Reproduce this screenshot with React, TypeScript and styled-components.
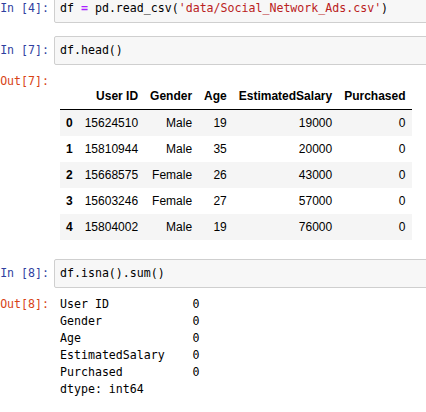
import React from 'react';
import styled, { createGlobalStyle } from 'styled-components';

const GlobalStyle = createGlobalStyle`
    html, body {
        margin: 0;
        padding: 0;
        background: #fff;
        overflow: hidden;
    }
`

type Row = [number, string, string, number, number, number]

const rows: Row[] = [
    [0, '15624510', 'Male', 19, 19000, 0],
    [1, '15810944', 'Male', 35, 20000, 0],
    [2, '15668575', 'Female', 26, 43000, 0],
    [3, '15603246', 'Female', 27, 57000, 0],
    [4, '15804002', 'Male', 19, 76000, 0],
]

const nulls = ['User ID', 'Gender', 'Age', 'EstimatedSalary', 'Purchased']

const pad = (s: string, n: number) => s + ' '.repeat(Math.max(1, n - s.length))

const App = () => {
    return <Notebook>
        <GlobalStyle />
        <Cell>
            <InputRow>
                <Prompt kind="in">In [4]:</Prompt>
                <InputBox>
                    df <Op>=</Op> pd.read_csv(<Str>'data/Social_Network_Ads.csv'</Str>)
                </InputBox>
            </InputRow>
        </Cell>
        <Cell>
            <InputRow>
                <Prompt kind="in">In [7]:</Prompt>
                <InputBox>df.head()</InputBox>
            </InputRow>
            <OutputRow $extra>
                <Prompt kind="out">Out[7]:</Prompt>
                <Frame>
                    <thead>
                        <tr>
                            <Th></Th>
                            <Th>User ID</Th>
                            <Th>Gender</Th>
                            <Th>Age</Th>
                            <Th>EstimatedSalary</Th>
                            <Th>Purchased</Th>
                        </tr>
                    </thead>
                    <tbody>
                        {rows.map((r) => (
                            <Tr key={r[0]} $shaded={r[0] % 2 === 0}>
                                <IndexTd>{r[0]}</IndexTd>
                                <Td>{r[1]}</Td>
                                <Td>{r[2]}</Td>
                                <Td>{r[3]}</Td>
                                <Td>{r[4]}</Td>
                                <Td>{r[5]}</Td>
                            </Tr>
                        ))}
                    </tbody>
                </Frame>
            </OutputRow>
        </Cell>
        <Cell>
            <InputRow>
                <Prompt kind="in">In [8]:</Prompt>
                <InputBox>df.isna().sum()</InputBox>
            </InputRow>
            <OutputRow>
                <Prompt kind="out">Out[8]:</Prompt>
                <Pre>
                    {nulls.map((n) => pad(n, 19) + '0').join('\n') + '\ndtype: int64'}
                </Pre>
            </OutputRow>
        </Cell>
    </Notebook>
}

export default App

const mono = `"DejaVu Sans Mono", "Liberation Mono", monospace`

const Notebook = styled.div`
    margin-top: -6px;
    width: 440px;
    font-family: ${mono};
    font-size: 11.6px;
    color: #000;
`
const Cell = styled.div`
    margin-bottom: 13px;
`
const InputRow = styled.div`
    display: flex;
    align-items: stretch;
`
const Prompt = styled.div<{ kind: 'in' | 'out' }>`
    width: 54px;
    flex: none;
    box-sizing: border-box;
    padding-right: 5px;
    text-align: right;
    font-family: ${mono};
    font-size: 11.6px;
    line-height: 17px;
    padding-top: ${p => (p.kind === 'in' ? '6px' : '0')};
    color: ${p => (p.kind === 'in' ? '#303F9F' : '#D84315')};
    white-space: pre;
`
const InputBox = styled.div`
    flex: 1;
    box-sizing: border-box;
    height: 29px;
    padding: 5px 5px 0;
    line-height: 17px;
    background: #f7f7f7;
    border: 1px solid #cfcfcf;
    border-radius: 2px;
    white-space: pre;
`
const Op = styled.span`
    color: #aa22ff;
    font-weight: bold;
`
const Str = styled.span`
    color: #ba2121;
`
const OutputRow = styled.div<{ $extra?: boolean }>`
    display: flex;
    margin-top: 8px;
    padding-bottom: ${p => (p.$extra ? '6px' : '0')};
`
const Frame = styled.table`
    margin: 9px 0 0 6px;
    border-collapse: collapse;
    border-spacing: 0;
    font-family: "Liberation Sans", Arial, sans-serif;
    font-size: 12px;
    color: #000;
`
const Th = styled.th`
    height: 27px;
    padding: 0 6px;
    text-align: right;
    vertical-align: middle;
    font-weight: bold;
    border-bottom: 1px solid #000;
    white-space: nowrap;
`
const Tr = styled.tr<{ $shaded: boolean }>`
    height: 26px;
    background: ${p => (p.$shaded ? '#f5f5f5' : 'transparent')};
`
const Td = styled.td`
    padding: 0 6px;
    text-align: right;
    vertical-align: middle;
    white-space: nowrap;
`
const IndexTd = styled(Td)`
    font-weight: bold;
`
const Pre = styled.pre`
    margin: 0 0 0 6px;
    font-family: ${mono};
    font-size: 11.6px;
    line-height: 17px;
`
